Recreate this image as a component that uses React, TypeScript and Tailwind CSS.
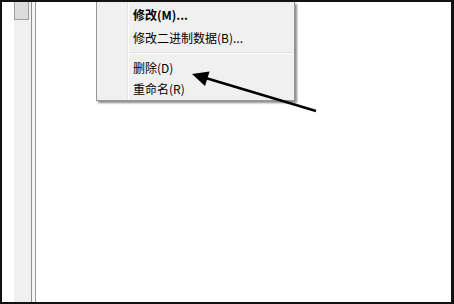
import React from 'react';

interface MenuItemProps {
  label: string;
  bold?: boolean;
  h: string;
}

const MenuItem: React.FC<MenuItemProps> = ({ label, bold, h }) => (
  <div className={`${h} flex items-center pl-[4px] text-[12px] leading-none text-black ${bold ? 'font-bold' : ''}`}>
    {label}
  </div>
);

const App: React.FC = () => {
  return (
    <div className="relative w-[454px] h-[304px] bg-[#111] pt-[2px] pl-[2px] pr-[3px] pb-[2px] font-['Noto_Sans_CJK_SC',sans-serif]">
      <div className="relative w-full h-full bg-white overflow-hidden flex">
        {/* left white strip */}
        <div className="w-[12px] h-full bg-white" />

        {/* scrollbar track + thumb */}
        <div className="w-[17px] h-full bg-[#f0f0f0]">
          <div className="w-[15px] h-[18px] bg-[#dcdcdc] border-x border-b border-[#9e9e9e]" />
        </div>

        {/* splitter lines */}
        <div className="w-px h-full bg-[#8f8f94]" />
        <div className="w-[3px] h-full bg-[#f5f5f5]" />
        <div className="w-px h-full bg-[#9a9ca0]" />

        {/* content area */}
        <div className="flex-1 h-full bg-white" />

        {/* context menu */}
        <div className="absolute left-[94px] top-0 w-[199px] bg-[#f0f0f0] border-x border-b border-[#979797] shadow-[2px_2px_2px_rgba(0,0,0,0.45)] flex">
          <div className="w-[30px]" />
          <div className="w-px bg-[#e2e3e3]" />
          <div className="w-px bg-white" />
          <div className="flex-1 flex flex-col pr-px">
            <MenuItem label="修改(M)..." bold h="h-[25px]" />
            <MenuItem label="修改二进制数据(B)..." h="h-[21px]" />
            <div className="h-[9px] flex flex-col justify-center">
              <div className="h-px bg-[#e0e0e0]" />
              <div className="h-px bg-white" />
            </div>
            <MenuItem label="删除(D)" h="h-[22px]" />
            <MenuItem label="重命名(R)" h="h-[20px]" />
            <div className="h-px" />
          </div>
        </div>
      </div>

      {/* annotation arrow */}
      <svg className="absolute inset-0 pointer-events-none" width="454" height="304" viewBox="0 0 454 304">
        <line x1="316" y1="111" x2="204" y2="77.5" stroke="#000" strokeWidth="2.4" />
        <polygon points="192,74 209.5,71.5 205,86" fill="#000" />
      </svg>
    </div>
  );
};

export default App;
